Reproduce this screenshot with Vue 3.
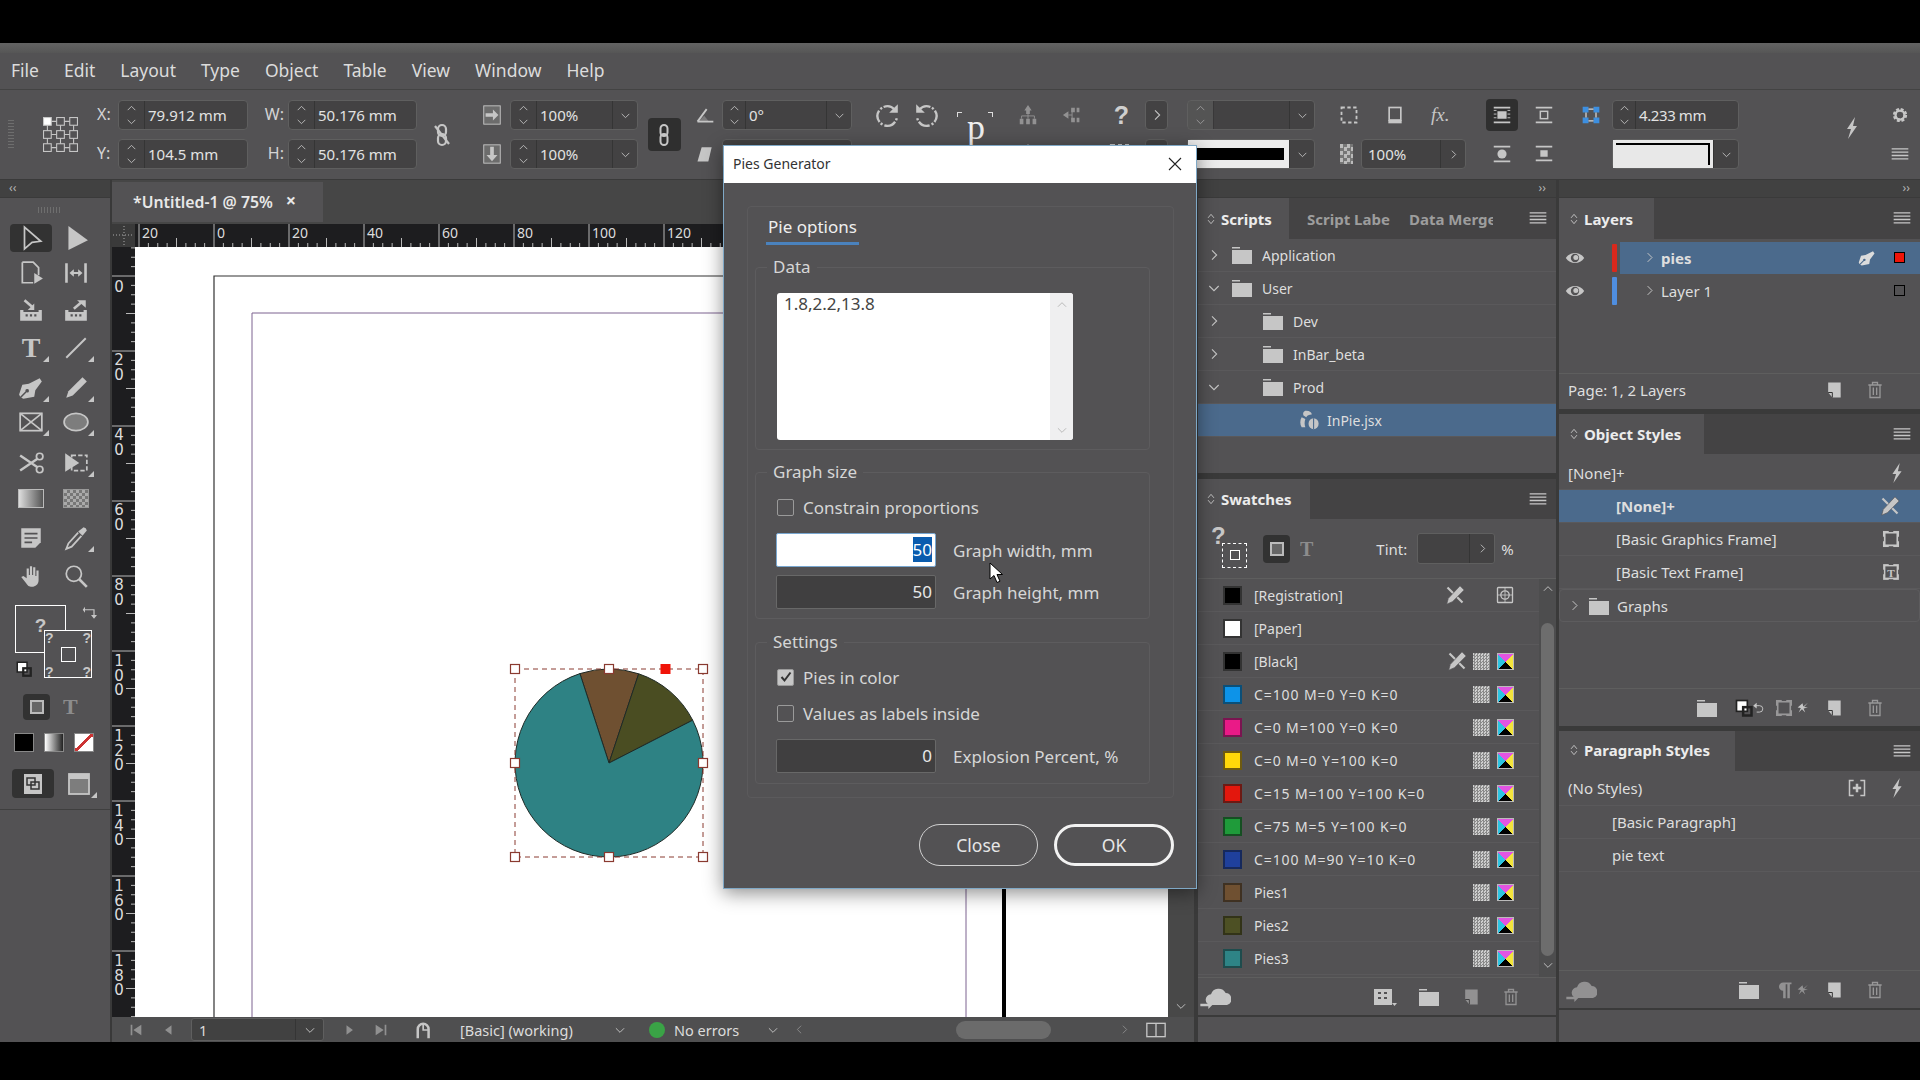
<script setup>
import { h } from 'vue'

const STROKE = 'fill="none" stroke="currentColor" stroke-width="1.6"'
const ICONS = {
  up: `<path d="M5 15l7-7 7 7" ${STROKE}/>`,
  down: `<path d="M5 9l7 7 7-7" ${STROKE}/>`,
  right: `<path d="M9 5l7 7-7 7" ${STROKE}/>`,
  left: `<path d="M15 5l-7 7 7 7" ${STROKE}/>`,
  menu: '<path d="M2 5h20v1.6H2zM2 9h20v1.6H2zM2 13h20v1.6H2zM2 17h20v1.6H2z" fill="currentColor"/>',
  updown: `<path d="M7 10l5-6 5 6M7 14l5 6 5-6" ${STROKE}/>`,
  eye: '<path d="M1 12c5-8 17-8 22 0-5 8-17 8-22 0z" fill="currentColor"/><circle cx="12" cy="12" r="5" fill="#535254"/><circle cx="13" cy="11.5" r="3" fill="currentColor"/>',
  folder: '<path d="M2 4h8v1.4H2zM2 7h20v14H2z" fill="currentColor"/>',
  trash: `<path d="M4 6h16M9 6V3h6v3M6 6v15h12V6M10 9v9M14 9v9" ${STROKE}/>`,
  newpage: '<path d="M5 3h15v18H10l-5-6z" fill="currentColor"/><path d="M5 15h5v6" fill="none" stroke="#333" stroke-width="1.2"/>',
  cloud: '<path d="M9 18a4 4 0 0 1 0-8 6 6 0 0 1 11-1 4.6 4.6 0 0 1 1 9z" fill="currentColor"/><path d="M1 17h6v-2l3 3-3 3v-2H1z" fill="currentColor"/>',
  bolt: '<path d="M15 1L7 13h4L8 23l9-13h-4z" fill="currentColor"/>',
  pencilx: '<path d="M3 3l18 18" fill="none" stroke="currentColor" stroke-width="2.6"/><path d="M18 1l5 5L9 20l-7 3 2-7z" fill="currentColor" stroke="#535254" stroke-width=".8"/>',
  gear: '<circle cx="12" cy="12" r="7" fill="none" stroke="currentColor" stroke-width="5" stroke-dasharray="3.4 2.1"/><circle cx="12" cy="12" r="6" fill="none" stroke="currentColor" stroke-width="3"/>',
  pen: '<path d="M20 3l2 3-6 8-1 6-10 2-2-1 5-5a1.6 1.6 0 1 0-1-1l-5 5-1-2 3-9 6-1z" fill="currentColor"/>',
  pencil: '<path d="M18 2l4 4-13 13-6 2 2-6z" fill="currentColor"/>',
  regmark: `<rect x="3" y="3" width="18" height="18" rx="1" ${STROKE}/><circle cx="12" cy="12" r="5" ${STROKE}/><path d="M12 3v18M3 12h18" fill="none" stroke="currentColor"/>`,
  frame: '<rect x="3" y="3" width="18" height="18" fill="none" stroke="currentColor" stroke-width="3.4"/><path d="M9 1.5h6M9 22.5h6M1.5 9v6M22.5 9v6" stroke="#535254" stroke-width="2"/>',
  frameT: '<rect x="3" y="3" width="18" height="18" fill="none" stroke="currentColor" stroke-width="3"/><path d="M9 1.5h6M9 22.5h6M1.5 9v6M22.5 9v6" stroke="#535254" stroke-width="2"/><text x="12" y="18" font-size="15" font-weight="700" text-anchor="middle" fill="currentColor" font-family="Liberation Serif">T</text>',
  arrowHollow: `<path d="M6 2l15 13-8 1-7 6z" ${STROKE}/>`,
  arrowSolid: '<path d="M5 1l18 13-18 9z" fill="currentColor"/>',
  pagetool: `<path d="M4 2h10l5 5v7M4 2v19h10" ${STROKE}/><path d="M15 12l8 5-8 5z" fill="currentColor"/>`,
  gap: '<path d="M2 3h2.4v18H2zM19.6 3H22v18h-2.4zM6 12l4-3.500V11h4V8.500l4 3.500-4 3.500V13h-4v2.500z" fill="currentColor"/>',
  collect: '<path d="M2 11h3v2h14v-2h3v10H2zM7 15h2v2H7zM11 15h2v2h-2zM15 15h2v2h-2z" fill="currentColor" fill-rule="evenodd"/><path d="M6 2l7 6" stroke="currentColor" stroke-width="2.4"/><path d="M15 5v6H9z" fill="currentColor"/>',
  place: '<path d="M2 11h3v2h14v-2h3v10H2zM7 15h2v2H7zM11 15h2v2h-2zM15 15h2v2h-2z" fill="currentColor" fill-rule="evenodd"/><path d="M10 10l7-6" stroke="currentColor" stroke-width="2.4"/><path d="M13 2h8v7z" fill="currentColor"/>',
  line: '<path d="M3 21L21 3" stroke="currentColor" stroke-width="1.8"/>',
  crossframe: `<rect x="2" y="4" width="20" height="16" ${STROKE}/><path d="M2 4l20 16M22 4L2 20" ${STROKE}/>`,
  ellipse: '<ellipse cx="12" cy="12" rx="11" ry="8" fill="#7d7d7d" stroke="currentColor" stroke-width="1.6"/>',
  scissors: `<circle cx="20" cy="6" r="3" ${STROKE}/><circle cx="20" cy="18" r="3" ${STROKE}/><path d="M2 5l16 11M2 19L18 8" fill="none" stroke="currentColor" stroke-width="2.2"/>`,
  free: '<path d="M2 3l13 9-13 8z" fill="currentColor"/><rect x="8" y="5" width="14" height="14" fill="none" stroke="currentColor" stroke-width="1.6" stroke-dasharray="4 2"/>',
  note: '<path d="M3 3h18v13l-5 5H3z" fill="currentColor"/><path d="M6 8h12M6 12h12M6 16h7" stroke="#535254" stroke-width="1.5"/>',
  dropper: '<path d="M21 3l1 2-4 5-4-4 5-4z" fill="currentColor"/><path d="M14 7l-9 10-2 5 5-2 9-10" fill="none" stroke="currentColor" stroke-width="1.6"/>',
  hand: '<path d="M5 12l3 2V5h2v6h1V3h2v8h1V4h2v8h1V7h2v9c0 4-3 6-6 6-3 0-4-1-6-4l-4-5z" fill="currentColor"/>',
  zoom: `<circle cx="10" cy="10" r="7" ${STROKE}/><path d="M15 15l7 7" fill="none" stroke="currentColor" stroke-width="2.4"/>`,
  swap: `<path d="M4 9h12v8" ${STROKE}/><path d="M4 5L1 9l3 4zM12 16h8l-4 5z" fill="currentColor"/>`,
  preview: '<rect x="3" y="2" width="18" height="20" fill="currentColor"/><rect x="6" y="6" width="8" height="7" fill="none" stroke="#333" stroke-width="1.5"/><rect x="10" y="10" width="8" height="7" fill="none" stroke="#333" stroke-width="1.5"/>',
  screen: '<rect x="2" y="2" width="20" height="20" fill="#7d7d7d" stroke="currentColor" stroke-width="1.8"/><rect x="2" y="2" width="20" height="5" fill="currentColor"/>',
  proxy: '<g fill="none" stroke="currentColor" stroke-width=".7"><rect x="1" y="1" width="5" height="5" fill="#fff"/><rect x="9.5" y="1" width="5" height="5"/><rect x="18" y="1" width="5" height="5"/><rect x="1" y="9.5" width="5" height="5"/><rect x="9.5" y="9.5" width="5" height="5"/><rect x="18" y="9.5" width="5" height="5"/><rect x="1" y="18" width="5" height="5"/><rect x="9.5" y="18" width="5" height="5"/><rect x="18" y="18" width="5" height="5"/><path d="M6 3.500h3.500M14.500 3.500H18M6 12h3.500M14.500 12H18M6 20.500h3.500M14.500 20.500H18M3.500 6v3.500M3.500 14.500V18M12 6v3.500M12 14.500V18M20.500 6v3.500M20.500 14.500V18"/></g>',
  chainoff: '<rect x="8" y="2" width="8" height="11" rx="4" fill="none" stroke="currentColor" stroke-width="2.2"/><rect x="8" y="11" width="8" height="11" rx="4" fill="none" stroke="currentColor" stroke-width="2.2"/><path d="M5 3l14 18" stroke="currentColor" stroke-width="2.2"/>',
  chain: '<rect x="8.5" y="2" width="7" height="11" rx="3.5" fill="none" stroke="currentColor" stroke-width="2"/><rect x="8.5" y="11" width="7" height="11" rx="3.5" fill="none" stroke="currentColor" stroke-width="2"/>',
  scalex: '<rect x="3" y="2" width="18" height="20" fill="#6c6c6c" stroke="currentColor"/><path d="M5 10h8V6l6 6-6 6v-4H5z" fill="currentColor"/>',
  scaley: '<rect x="3" y="2" width="18" height="20" fill="#6c6c6c" stroke="currentColor"/><path d="M10 4h4v9h4l-6 7-6-7h4z" fill="currentColor"/>',
  angle: '<path d="M3 20L14 5M3 20h19" fill="none" stroke="currentColor" stroke-width="2.2"/><path d="M11 13l6 7H4z" fill="currentColor" opacity=".35"/>',
  shear: '<path d="M8 4h12l-4 17H3z" fill="currentColor"/>',
  rotcw: '<path d="M19 7a9 9 0 1 0 2 8" fill="none" stroke="currentColor" stroke-width="2.2" stroke-dasharray="11 1.5 2 2"/><path d="M22 2v8h-8z" fill="currentColor"/>',
  rotccw: '<path d="M5 7a9 9 0 1 1-2 8" fill="none" stroke="currentColor" stroke-width="2.2" stroke-dasharray="11 1.5 2 2"/><path d="M2 2v8h8z" fill="currentColor"/>',
  tree: '<path d="M12 1l4 6H8zM10 7h4v4h-4zM3 16h4v6H3zM10 16h4v6h-4zM17 16h4v6h-4z" fill="currentColor"/><path d="M5 16v-3h14v3M12 11v5" fill="none" stroke="currentColor"/>',
  treeside: '<path d="M1 12l6-4v8zM10 4h4v5h-4zM16 4h3v5h-3zM10 15h4v5h-4zM16 15h3v5h-3z" fill="currentColor"/><path d="M7 12h4M11 6v12" fill="none" stroke="currentColor"/>',
  fitframe: '<rect x="3" y="3" width="18" height="18" fill="none" stroke="currentColor" stroke-width="2.2" stroke-dasharray="4 3"/>',
  shadow: '<rect x="5" y="3" width="14" height="15" fill="none" stroke="currentColor" stroke-width="2"/><rect x="4" y="18" width="16" height="4" fill="currentColor"/>',
  wrapall: '<path d="M3 3h18v2H3zM3 19h18v2H3zM7 8h10v8H7z" fill="currentColor"/><path d="M3 7h3M18 7h3M3 11h3M18 11h3M3 15h3M18 15h3" stroke="currentColor"/>',
  wrapin: `<path d="M3 3h18v2H3zM3 19h18v2H3z" fill="currentColor"/><rect x="8" y="8" width="8" height="8" ${STROKE}/>`,
  wrapcircle: '<path d="M3 3h18v2H3zM3 19h18v2H3z" fill="currentColor"/><circle cx="12" cy="12" r="5" fill="currentColor"/>',
  wrapbar: '<path d="M3 3h18v2H3zM3 18h18v2H3zM8 8h8v7H8z" fill="currentColor"/>',
  bluefit: '<path d="M2 2h7v7H2zM15 2h7v7h-7zM2 15h7v7H2zM15 15h7v7h-7z" fill="#3d8fe0"/><path d="M6 9v6M18 9v6M9 5h6M9 19h6" stroke="#d8d8d8" stroke-width="1.5"/>',
  first: '<path d="M4 4h2.500v16H4zM20 4v16L8 12z" fill="currentColor"/>',
  prev: '<path d="M18 4v16L7 12z" fill="currentColor"/>',
  next: '<path d="M6 4v16l11-8z" fill="currentColor"/>',
  last: '<path d="M4 4v16l12-8zM17.500 4H20v16h-2.500z" fill="currentColor"/>',
  preflight: '<path d="M3 22V11a8 8 0 0 1 16 0v11h-3V11a5 5 0 0 0-10 0v11z" fill="currentColor"/><path d="M11 6v6h6" fill="none" stroke="currentColor" stroke-width="2"/>',
  split: `<rect x="1" y="4" width="22" height="16" ${STROKE}/><path d="M12 4v16" ${STROKE}/>`,
  fillstroke: '<rect x="3" y="3" width="13" height="13" fill="#fff" stroke="#222" stroke-width="2"/><rect x="11" y="11" width="10" height="10" fill="none" stroke="#222" stroke-width="3"/>',
  undo: `<path d="M5 8h8a5 5 0 0 1 0 11H8" ${STROKE} stroke-width="2"/><path d="M8 3v10L2 8z" fill="currentColor"/>`,
  spark: '<path d="M12 4l1.500 6L22 3l-7 8 7 1-8 2 3 7-6-6-6 6 4-8-6-1z" fill="currentColor"/>',
  script: '<path d="M9 2c4 0 6 2 6 4-3 0-5 1-6 3L6 7C5 5 6 2 9 2zM4 9l4 2c-1 3-1 6 0 9H4c-2-3-2-8 0-11z" fill="currentColor"/><ellipse cx="17" cy="16" rx="5.500" ry="6" fill="currentColor"/><path d="M17 10v12" stroke="#4b6a8c" stroke-width="1.2"/>',
  grid4: '<path d="M1 4h18v16H1zM5 7v2h3V7zM11 7v2h3V7zM5 12v2h3v-2zM11 12v2h3v-2z" fill="currentColor" fill-rule="evenodd"/><path d="M19 18h5l-2.500 3z" fill="currentColor"/>',
  plusbox: '<path d="M8 3H3v18h5M16 3h5v18h-5" fill="none" stroke="currentColor" stroke-width="1.8"/><path d="M10.500 7h3v3.500H17v3h-3.500V17h-3v-3.500H7v-3h3.500z" fill="currentColor"/>',
  pilcrow: '<path d="M11 3h10v2h-2v17h-3V5h-2v17h-3v-9a5 5 0 0 1 0-10z" fill="currentColor"/>'
}

// small local icon renderer, n = icon name, s = pixel size
const Ico = (p) => h('svg', {
  viewBox: '0 0 24 24',
  width: p.s || 20,
  height: p.s || 20,
  innerHTML: ICONS[p.n]
})

const menus = ['File', 'Edit', 'Layout', 'Type', 'Object', 'Table', 'View', 'Window', 'Help']

const toolRows = [
  ['arrowHollow', 'arrowSolid'], ['pagetool', 'gap'], ['collect', 'place'],
  ['T', 'line'], ['pen', 'pencil'], ['crossframe', 'ellipse'],
  ['scissors', 'free'], ['grad', 'feather'],
  ['note', 'dropper'], ['hand', 'zoom']
]
const cornered = ['T', 'line', 'pen', 'pencil', 'crossframe', 'ellipse', 'free', 'dropper']

const swatches = [
  { name: '[Registration]', color: '#000', edge: '#333', locked: true, reg: true },
  { name: '[Paper]', color: '#fff', edge: '#333', plain: true },
  { name: '[Black]', color: '#000', edge: '#333', locked: true },
  { name: 'C=100 M=0 Y=0 K=0', color: '#0d93e8', edge: '#0b4f78' },
  { name: 'C=0 M=100 Y=0 K=0', color: '#ea1a87', edge: '#7a1450' },
  { name: 'C=0 M=0 Y=100 K=0', color: '#ffd80a', edge: '#6e5a10' },
  { name: 'C=15 M=100 Y=100 K=0', color: '#e3170d', edge: '#6c1a14' },
  { name: 'C=75 M=5 Y=100 K=0', color: '#1f9b3a', edge: '#154f22' },
  { name: 'C=100 M=90 Y=10 K=0', color: '#1f409c', edge: '#16295c' },
  { name: 'Pies1', color: '#6f5031', edge: '#3f3122' },
  { name: 'Pies2', color: '#4d5024', edge: '#323318' },
  { name: 'Pies3', color: '#2e8486', edge: '#1e4c4d' }
]

// ruler ticks, 75px for every 20 units
const hMajor = [-1, 0, 1, 2, 3, 4, 5, 6]
const hLabel = (k) => String(Math.abs(k * 20))
const hTicks = []
for (let i = -8; i < 56; i++) hTicks.push({ x: 214 + i * 9.375, len: i % 8 === 0 ? 23 : (i + 800) % 4 === 0 ? 9 : 4 })
const vMajor = [0, 1, 2, 3, 4, 5, 6, 7, 8, 9]
const vTicks = []
for (let i = -3; i < 80; i++) vTicks.push({ y: 276 + i * 9.375, len: i % 8 === 0 ? 23 : (i + 800) % 4 === 0 ? 9 : 4 })
const vBase = (k) => 276 + k * 75 + (k === 0 ? 16 : k >= 5 ? 15 : 14)

// pie, same values as the dialog's data field
const values = [1.8, 2.2, 13.8]
const fills = ['#6f5031', '#4a4d22', '#2e8284']
const cx = 609
const cy = 763
const r = 94
const total = values.reduce((a, b) => a + b, 0)
let angle = -18
const slices = values.map((v, i) => {
  const a0 = (angle * Math.PI) / 180
  angle += (v / total) * 360
  const a1 = (angle * Math.PI) / 180
  const large = v / total > 0.5 ? 1 : 0
  return {
    fill: fills[i],
    d: `M${cx} ${cy}L${cx + r * Math.sin(a0)} ${cy - r * Math.cos(a0)}A${r} ${r} 0 ${large} 1 ${cx + r * Math.sin(a1)} ${cy - r * Math.cos(a1)}Z`
  }
})
const handles = [[515, 669], [609, 669], [703, 669], [515, 763], [703, 763], [515, 857], [609, 857], [703, 857]]
</script>

<template>
  <div class="app">
    <div class="strip"></div>
    <div class="menubar">
      <span v-for="m in menus" :key="m">{{ m }}</span>
    </div>

    <div class="control">
      <div class="c2 grip"></div>
      <div class="c2 proxy"><Ico n="proxy" :s="37" /></div>
      <div class="lab">X:</div>
      <div class="lab">Y:</div>
      <div class="field"><div class="step"><Ico n="up" :s="13" /><Ico n="down" :s="13" /></div><span>79.912 mm</span></div>
      <div class="field"><div class="step"><Ico n="up" :s="13" /><Ico n="down" :s="13" /></div><span>104.5 mm</span></div>
      <div class="lab rt">W:</div>
      <div class="lab rt">H:</div>
      <div class="field"><div class="step"><Ico n="up" :s="13" /><Ico n="down" :s="13" /></div><span>50.176 mm</span></div>
      <div class="field"><div class="step"><Ico n="up" :s="13" /><Ico n="down" :s="13" /></div><span>50.176 mm</span></div>
      <div class="c2 cico"><Ico n="chainoff" :s="24" /></div>
      <div class="cico end"><Ico n="scalex" :s="22" /></div>
      <div class="cico end"><Ico n="scaley" :s="22" /></div>
      <div class="field"><div class="step"><Ico n="up" :s="13" /><Ico n="down" :s="13" /></div><span>100%</span><div class="drop"><Ico n="down" :s="13" /></div></div>
      <div class="field"><div class="step"><Ico n="up" :s="13" /><Ico n="down" :s="13" /></div><span>100%</span><div class="drop"><Ico n="down" :s="13" /></div></div>
      <div class="c2 cico"><div class="chainbtn"><Ico n="chain" :s="24" /></div></div>
      <div class="cico end"><Ico n="angle" :s="20" /></div>
      <div class="cico end"><Ico n="shear" :s="20" /></div>
      <div class="field"><div class="step slim"><Ico n="up" :s="13" /><Ico n="down" :s="13" /></div><span>0°</span><div class="drop"><Ico n="down" :s="13" /></div></div>
      <div class="field"></div>
      <div></div><div></div>
      <div class="cico"><Ico n="rotcw" :s="26" /></div><div class="cico"><Ico n="fitframe" :s="20" /></div>
      <div class="cico"><Ico n="rotccw" :s="26" /></div><div class="cico"><Ico n="fitframe" :s="20" /></div>
      <div class="cico flip"><i class="pmark"></i><span class="pchar">p</span><i class="pmark r"></i></div><div></div>
      <div class="cico dim"><Ico n="tree" :s="22" /></div><div class="cico"><Ico n="tree" :s="22" /></div>
      <div class="cico dim"><Ico n="treeside" :s="22" /></div><div></div>
      <div class="cico"><span class="qmark">?</span></div><div class="cico"><Ico n="fitframe" :s="24" /></div>
      <div class="sqbtn"><Ico n="right" :s="16" /></div><div class="sqbtn"><Ico n="right" :s="16" /></div>
      <div></div><div></div>
      <div class="field"><div class="step off"><Ico n="up" :s="13" /><Ico n="down" :s="13" /></div><span></span><div class="drop"><Ico n="down" :s="13" /></div></div>
      <div class="field"><div class="strokebox"><i></i></div><div class="drop"><Ico n="down" :s="13" /></div></div>
      <div></div><div></div>
      <div class="fxrow"><Ico n="fitframe" :s="20" /><Ico n="shadow" :s="20" /><span class="fx">fx.</span></div>
      <div class="opac">
        <div class="checker"></div>
        <div class="field wide"><span>100%</span><div class="drop"><Ico n="right" :s="13" /></div></div>
      </div>
      <div class="cico"><div class="tilebtn"><Ico n="wrapall" :s="22" /></div></div>
      <div class="cico"><Ico n="wrapcircle" :s="22" /></div>
      <div class="cico"><Ico n="wrapin" :s="22" /></div>
      <div class="cico"><Ico n="wrapbar" :s="22" /></div>
      <div class="cico blue2"><Ico n="bluefit" :s="20" /></div><div></div>
      <div class="field"><div class="step slim"><Ico n="up" :s="13" /><Ico n="down" :s="13" /></div><span class="tight">4.233 mm</span></div>
      <div class="field"><div class="linebox"></div><div class="drop"><Ico n="down" :s="13" /></div></div>
      <div></div><div></div>
      <div class="c2 cico boltcell"><Ico n="bolt" :s="24" /></div>
      <div class="cico"><Ico n="gear" :s="18" /></div>
      <div class="cico"><Ico n="menu" :s="20" /></div>
    </div>

    <div class="work">
      <aside class="tools">
        <div class="collapse left">‹‹</div>
        <div class="toolgrip"></div>
        <div class="toolgrid">
          <template v-for="(row, i) in toolRows" :key="i">
            <div v-for="t in row" :key="t" class="tool" :class="{ on: t === 'arrowHollow' }">
              <span v-if="t === 'T'" class="tee">T</span>
              <div v-else-if="t === 'grad'" class="gradbox"></div>
              <div v-else-if="t === 'feather'" class="featherbox"></div>
              <Ico v-else :n="t" :s="26" />
              <i v-if="cornered.includes(t)" class="tri"></i>
            </div>
          </template>
        </div>
        <div class="fillstroke">
          <div class="fillbox"><span class="q">?</span></div>
          <div class="strokebig">
            <span class="q tl">?</span><span class="q tr">?</span><span class="q bl">?</span><span class="q br">?</span>
            <i></i>
          </div>
          <Ico class="swapico" n="swap" :s="18" />
          <Ico class="defico" n="fillstroke" :s="18" />
        </div>
        <div class="applyto">
          <div class="applybtn"><i></i></div>
          <span class="tee dim">T</span>
        </div>
        <div class="applycolor">
          <div class="blackbox"></div>
          <div class="gradmini"></div>
          <div class="nonebox"></div>
        </div>
        <div class="viewmode">
          <div class="viewbtn"><Ico n="preview" :s="24" /></div>
          <div class="viewalt"><Ico n="screen" :s="24" /><i class="tri"></i></div>
        </div>
      </aside>

      <section class="doc">
        <div class="tabbar">
          <div class="doctab"><b>*Untitled-1 @ 75%</b><span class="x">×</span></div>
        </div>
        <div class="hruler">
          <svg width="1082" height="23" viewBox="112 224 1082 23">
            <rect x="112" y="224" width="23" height="23" fill="#3a3a3a" />
            <path d="M113 235h21M124 226v20" stroke="#aaa" stroke-dasharray="1 2" />
            <line v-for="(t, i) in hTicks" :key="i" :x1="t.x" :x2="t.x" y1="247" :y2="247 - t.len" stroke="#b9b9b9" />
            <text v-for="k in hMajor" :key="k" :x="217 + k * 75" y="238" class="rl">{{ hLabel(k) }}</text>
          </svg>
        </div>
        <div class="canvasrow">
          <div class="vruler">
            <svg width="23" height="770" viewBox="112 247 23 770">
              <line v-for="(t, i) in vTicks" :key="i" :y1="t.y" :y2="t.y" x1="135" :x2="135 - t.len" stroke="#b9b9b9" />
              <template v-for="k in vMajor" :key="k">
                <text v-for="(c, j) in String(k * 20)" :key="j" x="119" :y="vBase(k) + j * 14.5" text-anchor="middle" class="rl big">{{ c }}</text>
              </template>
            </svg>
          </div>
          <div class="canvas">
            <svg width="1033" height="770" viewBox="135 247 1033 770">
              <path d="M214 1017V276H1004" fill="none" stroke="#333" stroke-width="1.2" />
              <path d="M1004 276V1017" fill="none" stroke="#000" stroke-width="4" />
              <path d="M252 1017V313H966V1017" fill="none" stroke="#7d6290" />
              <path v-for="s in slices" :key="s.fill" :d="s.d" :fill="s.fill" stroke="#1f2a26" stroke-width="1" />
              <rect x="515" y="669" width="188" height="188" fill="none" stroke="#8a3a30" stroke-dasharray="5 4" />
              <rect v-for="h2 in handles" :key="h2.join()" :x="h2[0] - 4.5" :y="h2[1] - 4.5" width="9" height="9" fill="#fff" stroke="#8a3a30" stroke-width="1.2" />
              <rect x="660.5" y="664" width="10" height="10" fill="#f01408" />
            </svg>
          </div>
          <div class="vscroll"><Ico n="down" :s="14" /></div>
        </div>
        <div class="status">
          <Ico class="st dim first" n="first" :s="16" />
          <Ico class="st dim prev" n="prev" :s="14" />
          <div class="pagefield"><span>1</span><div class="drop"><Ico n="down" :s="14" /></div></div>
          <Ico class="st dim next" n="next" :s="14" />
          <Ico class="st dim last" n="last" :s="16" />
          <Ico class="st pre" n="preflight" :s="20" />
          <span class="prof">[Basic] (working)</span>
          <Ico class="st" n="down" :s="14" />
          <i class="dot"></i>
          <span class="noerr">No errors</span>
          <Ico class="st" n="down" :s="14" />
          <Ico class="st dim lf" n="left" :s="13" />
          <div class="thumb"></div>
          <Ico class="st dim rg" n="right" :s="13" />
          <Ico class="st spl" n="split" :s="20" />
        </div>
      </section>

      <div class="dock dock1">
        <div class="collapse right">››</div>
        <div class="panel scripts">
          <div class="phead">
            <div class="ptab"><Ico n="updown" :s="14" />Scripts</div>
            <div class="ptab2 a">Script Labe</div>
            <div class="ptab2 b">Data Merge</div>
            <Ico class="pmenu" n="menu" :s="20" />
          </div>
          <div class="row tree"><Ico class="chev" n="right" :s="16" /><Ico class="fold" n="folder" :s="24" /><span>Application</span></div>
          <div class="row tree"><Ico class="chev" n="down" :s="16" /><Ico class="fold" n="folder" :s="24" /><span>User</span></div>
          <div class="row tree in"><Ico class="chev" n="right" :s="16" /><Ico class="fold" n="folder" :s="24" /><span>Dev</span></div>
          <div class="row tree in"><Ico class="chev" n="right" :s="16" /><Ico class="fold" n="folder" :s="24" /><span>InBar_beta</span></div>
          <div class="row tree in"><Ico class="chev" n="down" :s="16" /><Ico class="fold" n="folder" :s="24" /><span>Prod</span></div>
          <div class="row tree sel script"><Ico class="fold" n="script" :s="22" /><span>InPie.jsx</span></div>
        </div>
        <div class="panel swatches">
          <div class="phead short">
            <div class="ptab w1"><Ico n="updown" :s="14" />Swatches</div>
            <Ico class="pmenu" n="menu" :s="20" />
          </div>
          <div class="tintrow">
            <div class="minifs">
              <span class="q">?</span>
              <div class="minist"><i></i></div>
            </div>
            <div class="applybtn small"><i></i></div>
            <span class="tee dim">T</span>
            <span class="tintlab">Tint:</span>
            <div class="tintfield"><div class="drop"><Ico n="right" :s="13" /></div></div>
            <span class="pct">%</span>
          </div>
          <div class="swatchbody">
            <div class="swlist">
              <div v-for="s in swatches" :key="s.name" class="swrow">
                <i class="chip" :style="{ background: s.color, borderColor: s.edge }"></i>
                <span class="swname" :class="{ cmykname: s.name.startsWith('C=') }">{{ s.name }}</span>
                <Ico v-if="s.locked" class="lock" n="pencilx" :s="20" />
                <i v-if="!s.plain && !s.reg" class="tone"></i>
                <Ico v-if="s.reg" class="regi" n="regmark" :s="20" />
                <i v-else-if="!s.plain" class="cmyk"></i>
              </div>
            </div>
            <div class="swscroll">
              <Ico n="up" :s="14" />
              <div class="swthumb"></div>
              <Ico n="down" :s="14" />
            </div>
          </div>
          <div class="pfoot swfoot">
            <Ico class="cl" n="cloud" :s="32" />
            <span class="sp"></span>
            <Ico n="grid4" :s="24" />
            <Ico n="folder" :s="24" />
            <Ico class="dim" n="newpage" :s="20" />
            <Ico class="dim" n="trash" :s="20" />
          </div>
        </div>
        <div class="endbar"></div>
      </div>

      <div class="dock dock2">
        <div class="collapse right">››</div>
        <div class="panel layers">
          <div class="phead">
            <div class="ptab w2"><Ico n="updown" :s="14" />Layers</div>
            <Ico class="pmenu" n="menu" :s="20" />
          </div>
          <div class="layerlist">
            <div class="lrow">
              <Ico class="leye" n="eye" :s="20" />
              <i class="lbar red"></i>
              <div class="lmain sel"><Ico n="right" :s="15" /><b>pies</b><Ico class="lpen" n="pen" :s="18" /><i class="lsq redsq"></i></div>
            </div>
            <div class="lrow">
              <Ico class="leye" n="eye" :s="20" />
              <i class="lbar blue"></i>
              <div class="lmain"><Ico n="right" :s="15" /><span>Layer 1</span><i class="lsq"></i></div>
            </div>
          </div>
          <div class="pfoot lfoot">
            <span>Page: 1, 2 Layers</span>
            <span class="sp"></span>
            <Ico n="newpage" :s="20" />
            <Ico class="dimmer" n="trash" :s="20" />
          </div>
        </div>
        <div class="panel objstyles">
          <div class="phead short">
            <div class="ptab w3"><Ico n="updown" :s="14" />Object Styles</div>
            <Ico class="pmenu" n="menu" :s="20" />
          </div>
          <div class="stylelist obj">
            <div class="srow"><span>[None]+</span><Ico class="boltr" n="bolt" :s="22" /></div>
            <div class="srow ind sel"><b>[None]+</b><Ico n="pencilx" :s="20" /></div>
            <div class="srow ind"><span>[Basic Graphics Frame]</span><Ico n="frame" :s="18" /></div>
            <div class="srow ind"><span>[Basic Text Frame]</span><Ico n="frameT" :s="18" /></div>
            <div class="srow group"><Ico n="right" :s="15" /><Ico class="gf" n="folder" :s="24" /><span>Graphs</span></div>
          </div>
          <div class="pfoot ofoot">
            <Ico class="m1" n="folder" :s="24" />
            <Ico class="m2" n="fillstroke" :s="20" />
            <Ico class="m3" n="undo" :s="14" />
            <Ico class="m4 dimmer" n="frame" :s="18" />
            <Ico class="m5" n="spark" :s="13" />
            <Ico class="m6" n="newpage" :s="20" />
            <Ico class="m7 dimmer" n="trash" :s="20" />
          </div>
        </div>
        <div class="panel parastyles">
          <div class="phead short">
            <div class="ptab w4"><Ico n="updown" :s="14" />Paragraph Styles</div>
            <Ico class="pmenu" n="menu" :s="20" />
          </div>
          <div class="stylelist">
            <div class="srow first"><span>(No Styles)</span><Ico class="pb" n="plusbox" :s="20" /><Ico class="boltr" n="bolt" :s="22" /></div>
            <div class="srow ind2"><span>[Basic Paragraph]</span></div>
            <div class="srow ind2"><span>pie text</span></div>
          </div>
          <div class="pfoot pfooter">
            <Ico class="dim cl" n="cloud" :s="32" />
            <span class="sp"></span>
            <Ico n="folder" :s="24" />
            <Ico class="dim m8" n="pilcrow" :s="20" />
            <Ico class="dim m9" n="spark" :s="13" />
            <Ico class="m6" n="newpage" :s="20" />
            <Ico class="m7 dimmer" n="trash" :s="20" />
          </div>
        </div>
        <div class="endbar"></div>
      </div>
    </div>

    <div class="dialog">
      <div class="titlebar">
        <span>Pies Generator</span>
        <svg class="closex" width="14" height="14" viewBox="0 0 14 14"><path d="M1 1l12 12M13 1L1 13" stroke="#222" stroke-width="1.1" /></svg>
      </div>
      <div class="dbody">
        <div class="dpanel">
          <div class="dtab"><span>Pie options</span></div>
          <div class="group g-data">
            <div class="glabel">Data</div>
            <div class="textbox">
              <div class="tb-text">1.8,2.2,13.8</div>
              <div class="tb-scroll"><Ico n="up" :s="14" /><Ico n="down" :s="14" /></div>
            </div>
          </div>
          <div class="group g-size">
            <div class="glabel">Graph size</div>
            <label class="chk"><i class="box"></i>Constrain proportions</label>
            <div class="inrow"><div class="input focus"><mark>50</mark></div><span>Graph width, mm</span></div>
            <div class="inrow"><div class="input">50</div><span>Graph height, mm</span></div>
          </div>
          <div class="group g-set">
            <div class="glabel">Settings</div>
            <label class="chk"><i class="box on"><svg width="14" height="14" viewBox="0 0 14 14"><path d="M2.5 7l3 3.500 6-8" fill="none" stroke="#333" stroke-width="2" /></svg></i>Pies in color</label>
            <label class="chk"><i class="box"></i>Values as labels inside</label>
            <div class="inrow"><div class="input">0</div><span>Explosion Percent, %</span></div>
          </div>
        </div>
        <div class="dbuttons">
          <button type="button" class="btn">Close</button>
          <button type="button" class="btn primary">OK</button>
        </div>
      </div>
      <svg class="cursor" width="14" height="22" viewBox="0 0 14 22"><path d="M1 1v16l4-3.500 3 7 3-1.300-3-6.700h5.500z" fill="#fff" stroke="#000" /></svg>
    </div>
  </div>
</template>

<style>
html, body { margin: 0; background: #000; }
</style>

<style scoped>
.app {
  position: relative;
  width: 1920px;
  height: 1080px;
  padding-top: 43px;
  box-sizing: border-box;
  background: #000;
  overflow: hidden;
  color: #dedede;
  font-family: "Noto Sans", "Open Sans", sans-serif;
  font-size: 14px;
}
svg { display: block; flex: none; color: #c6c6c6; }
.dim { opacity: .55; }
.dimmer { opacity: .6; }
.sp { flex: 1; }

.strip { height: 10px; background: linear-gradient(#636363, #565656); }
.menubar {
  display: flex;
  align-items: center;
  gap: 25px;
  padding: 0 0 2px 11px;
  box-sizing: border-box;
  height: 37px;
  background: #535254;
  border-bottom: 1px solid #434343;
  font-size: 17.5px;
  color: #dcdcdc;
}

.control {
  height: 90px;
  box-sizing: border-box;
  padding-top: 10px;
  display: grid;
  grid-auto-flow: column;
  grid-template-rows: 30px 30px;
  row-gap: 9px;
  grid-template-columns: 42px 55px 21px 130px 40px 129px 50px 43px 128px 52px 32px 130px 15px 40px 40px 58px 46px 44px 50px 23px 19px 128px 15px 150px 44px 40px 48px 127px 81px 60px 40px;
  background: #535254;
  border-bottom: 1px solid #3a3a3a;
}
.c2 { grid-row: span 2; }
.grip { margin: 20px 0 0 8px; width: 6px; height: 30px; background: repeating-linear-gradient(#6e6e6e 0 1px, transparent 1px 3px); }
.proxy { padding-top: 16px; }
.lab { line-height: 28px; font-size: 16px; color: #d4d4d4; }
.lab.rt { text-align: right; padding-right: 4px; }
.field {
  display: flex;
  align-items: center;
  min-width: 0;
  background: #434243;
  border: 1px solid #5f5f5f;
  border-radius: 4px;
  box-sizing: border-box;
  font-size: 15px;
  color: #e2e2e2;
}
.field > span { flex: 1; padding-left: 3px; padding-bottom: 1px; white-space: nowrap; }
.field > span.tight { letter-spacing: -.4px; }
.step {
  width: 25px;
  height: 100%;
  display: flex;
  flex-direction: column;
  align-items: center;
  justify-content: center;
  flex: none;
  border-right: 1px solid #353535;
}
.step.slim { width: 22px; }
.step.off { background: #5c5c5c; opacity: .7; }
.drop {
  width: 24px;
  height: 100%;
  flex: none;
  display: flex;
  align-items: center;
  justify-content: center;
  border-left: 1px solid #353535;
}
.cico { display: flex; align-items: center; justify-content: center; }
.cico.end { justify-content: flex-end; padding-right: 7px; }
.cico.flip { align-items: flex-start; position: relative; }
.cico.blue2 { padding-left: 5px; }
.boltcell { padding: 0 0 14px 4px; }
.pmark { position: absolute; top: 12px; left: 10px; width: 4px; height: 4px; border-left: 1px solid #ddd; border-top: 1px solid #ddd; }
.pmark.r { left: auto; right: 12px; border-left: 0; border-right: 1px solid #ddd; }
.chainbtn {
  width: 33px;
  height: 33px;
  display: flex;
  align-items: center;
  justify-content: center;
  background: #2f2f2f;
  border-radius: 4px;
}
.pchar { font: 36px/30px "Liberation Serif", serif; color: #eee; margin-top: 12px; }
.qmark { font: bold 25px "Liberation Sans", sans-serif; color: #cfcfcf; margin-left: 3px; }
.sqbtn {
  display: flex;
  align-items: center;
  justify-content: center;
  background: #434243;
  border-radius: 4px;
  border: 1px solid #5f5f5f;
}
.strokebox { flex: 1; height: 100%; background: #ececec; display: flex; align-items: center; padding-right: 5px; }
.strokebox i { display: block; width: 100%; height: 12px; background: #000; }
.fxrow { display: flex; align-items: center; gap: 26px; padding-left: 9px; }
.fx { font: italic 19px "Liberation Serif", serif; color: #c6c6c6; }
.opac { display: flex; align-items: center; gap: 8px; padding-left: 10px; }
.checker { width: 13px; height: 20px; background: repeating-conic-gradient(#777 0 25%, #bbb 0 50%) 0 0/7px 7px; }
.field.wide { width: 105px; height: 30px; }
.field.wide > span { padding-left: 6px; }
.tilebtn { width: 32px; height: 32px; background: #2f2f2f; border-radius: 4px; display: flex; align-items: center; justify-content: center; }
.linebox { flex: 1; height: 100%; background: #e8e8e8; border-top: 0; position: relative; }
.linebox::after { content: ""; position: absolute; left: 3px; right: 3px; top: 3px; bottom: 3px; border-top: 2px solid #000; border-right: 2px solid #000; }

.work { display: flex; height: 862px; background: #535254; }
.collapse { height: 18px; box-sizing: border-box; line-height: 15px; background: #414141; color: #b4b4b4; font-size: 12px; border-bottom: 1px solid #3a3a3a; }
.collapse.left { padding-left: 9px; }
.collapse.right { text-align: right; padding-right: 10px; }

.tools { width: 112px; box-sizing: border-box; flex: none; border-right: 2px solid #393939; height: 862px; }
.toolgrip { height: 24px; background: repeating-linear-gradient(90deg, #6e6e6e 0 1px, transparent 1px 3px) 38px 9px/24px 6px no-repeat; }
.toolgrid {
  display: grid;
  grid-template-columns: 45px 45px;
  grid-template-rows: 35px 38px 37px 40px 34px 41px 35px 40px 38px 29px;
  padding-left: 10px;
  padding-top: 4px;
}
.tool { position: relative; width: 42px; height: 28px; display: flex; align-items: center; justify-content: center; margin-top: -2px; }
.tool.on { background: #323232; border-radius: 4px; }
.tri { position: absolute; right: 3px; bottom: 0; width: 0; height: 0; border-left: 6px solid transparent; border-bottom: 6px solid #c6c6c6; }
.tee { font: bold 28px/28px "Liberation Serif", serif; color: #c6c6c6; }
.tee.dim { font-size: 22px; opacity: .5; }
.gradbox { width: 24px; height: 17px; background: linear-gradient(90deg, #ddd, #555); border: 1px solid #bbb; }
.featherbox { width: 24px; height: 17px; background: repeating-conic-gradient(#777 0 25%, #aaa 0 50%) 0 0/6px 6px; border: 1px solid #999; }
.fillstroke { position: relative; height: 89px; margin-top: 12px; }
.fillbox { position: absolute; left: 15px; top: 0; width: 51px; height: 48px; border: 1px solid #fff; display: flex; justify-content: center; padding-top: 10px; box-sizing: border-box; }
.q { font: bold 19px/20px "Liberation Sans", sans-serif; color: #c6c6c6; }
.strokebig { position: absolute; left: 44px; top: 25px; width: 48px; height: 48px; border: 1px solid #fff; background: #535254; box-sizing: border-box; }
.strokebig i { position: absolute; left: 16px; top: 16px; width: 15px; height: 15px; border: 1px solid #fff; box-sizing: border-box; }
.strokebig .q { position: absolute; font-size: 14px; line-height: 14px; }
.tl { left: 0; top: 0; } .tr { right: 0; top: 0; } .bl { left: 0; bottom: -2px; } .br { right: 0; bottom: -2px; }
.swapico { position: absolute; left: 82px; top: -2px; }
.defico { position: absolute; left: 15px; top: 55px; }
.applyto { display: flex; align-items: center; gap: 13px; padding-left: 23px; height: 26px; }
.applybtn { width: 27px; height: 26px; background: #323232; border-radius: 4px; display: flex; align-items: center; justify-content: center; }
.applybtn i { width: 10px; height: 10px; border: 2px solid #bbb; background: #666; }
.applycolor { display: flex; gap: 10px; padding: 0 0 0 14px; margin-top: 13px; }
.applycolor div { width: 18px; height: 17px; border: 1px solid #888; box-sizing: content-box; }
.blackbox { background: #000; }
.gradmini { background: linear-gradient(90deg, #fff, #222); }
.nonebox { background: linear-gradient(to top left, #fff 44%, #c33 44% 56%, #fff 56%); }
.viewmode { display: flex; gap: 4px; padding-left: 12px; margin-top: 17px; height: 29px; padding-bottom: 11px; border-bottom: 1px solid #3f3f3f; }
.viewbtn { width: 42px; height: 29px; background: #323232; border-radius: 4px; display: flex; align-items: center; justify-content: center; }
.viewalt { position: relative; width: 42px; display: flex; align-items: center; justify-content: center; }

.doc { width: 1082px; flex: none; display: flex; flex-direction: column; }
.tabbar { height: 44px; box-sizing: border-box; padding-top: 2px; background: #464646; }
.doctab { width: 211px; height: 40px; box-sizing: border-box; padding-left: 21px; display: flex; align-items: center; gap: 13px; background: #535254; font-size: 15.8px; color: #e8e8e8; white-space: nowrap; }
.doctab b { font-weight: 600; }
.x { font-size: 18px; font-weight: bold; line-height: 14px; margin-top: -4px; }
.hruler { height: 23px; background: #1d1d1f; }
.rl { font: 14px "Noto Sans", sans-serif; fill: #dcdcdc; }
.rl.big { font: 15px "DejaVu Sans", sans-serif; }
.canvasrow { height: 770px; display: flex; }
.vruler { width: 23px; background: #1d1d1f; flex: none; }
.canvas { width: 1033px; background: #fff; flex: none; }
.vscroll { width: 26px; flex: none; background: #484848; display: flex; align-items: flex-end; justify-content: center; padding-bottom: 4px; box-sizing: border-box; }
.status { height: 25px; display: flex; align-items: center; background: #4f4f50; color: #dcdcdc; font-size: 14.5px; white-space: nowrap; }
.st.first { margin-left: 16px; }
.st.prev { margin-left: 17px; }
.pagefield { width: 133px; height: 23px; margin-left: 16px; display: flex; align-items: center; background: #414141; border: 1px solid #5f5f5f; border-radius: 3px; box-sizing: border-box; padding-left: 7px; }
.pagefield span { flex: 1; }
.pagefield .drop { width: 27px; }
.st.next { margin-left: 19px; }
.st.last { margin-left: 16px; }
.st.pre { margin-left: 25px; }
.prof { margin-left: 26px; width: 153px; }
.dot { width: 16px; height: 16px; border-radius: 50%; background: #3aa346; margin-left: 22px; }
.noerr { margin-left: 9px; width: 92px; }
.st.lf { margin-left: 13px; }
.thumb { width: 95px; height: 18px; border-radius: 9px; background: #6b6b6b; margin-left: 150px; }
.st.rg { margin-left: 67px; }
.st.spl { margin-left: 15px; }

.dock { width: 362px; flex: none; display: flex; flex-direction: column; background: #3a3a3a; }
.dock1 { box-sizing: border-box; padding-left: 4px; }
.dock2 { width: 364px; box-sizing: border-box; padding-left: 3px; }
.panel { background: #535254; display: flex; flex-direction: column; }
.scripts { height: 275px; margin-bottom: 6px; }
.swatches { height: 536px; }
.layers { height: 211px; margin-bottom: 5px; }
.objstyles { height: 312px; margin-bottom: 5px; }
.parastyles { height: 277px; }
.endbar { flex: 1; background: #535254; margin-top: 2px; }
.phead { height: 41px; flex: none; display: flex; background: #444344; position: relative; font-weight: 700; align-items: stretch; font-size: 15px; }
.phead.short { height: 40px; }
.ptab { width: 91px; display: flex; align-items: center; gap: 3px; padding-left: 6px; box-sizing: border-box; background: #535254; color: #ececec; white-space: nowrap; }
.ptab.w1 { width: 112px; }
.ptab.w2 { width: 95px; padding-left: 8px; }
.ptab.w3 { width: 145px; padding-left: 8px; }
.ptab.w4 { width: 176px; padding-left: 8px; padding-bottom: 2px; }
.ptab2 { display: flex; align-items: center; color: #9d9d9d; overflow: hidden; white-space: nowrap; }
.ptab2.a { width: 84px; margin-left: 18px; }
.ptab2.b { width: 84px; margin-left: 18px; }
.pmenu { position: absolute; right: 8px; top: 10px; }

.row { height: 33px; display: flex; align-items: center; border-bottom: 1px solid #5a595b; box-sizing: border-box; white-space: nowrap; font-size: 14px; }
.chev { margin-left: 8px; }
.fold { margin-left: 8px; }
.row.tree > span { margin-left: 8px; }
.row.in .fold { margin-left: 39px; }
.sel { background: #4b6a8c; }
.row.script { padding-left: 100px; }
.row.script .fold { margin: 0; }
.row.script span { margin-left: 7px; }

.tintrow { height: 60px; flex: none; display: flex; align-items: center; border-bottom: 1px solid #5e5e5e; box-sizing: border-box; font-size: 15px; }
.minifs { position: relative; width: 36px; height: 38px; margin-left: 13px; }
.minifs > .q { position: absolute; left: 0; top: -4px; font-size: 24px; }
.minist { position: absolute; right: 0; bottom: 0; width: 25px; height: 25px; border: 1px dashed #fff; box-sizing: border-box; display: flex; align-items: center; justify-content: center; background: #535254; }
.minist i { width: 8px; height: 8px; border: 1px solid #fff; }
.applybtn.small { margin-left: 16px; height: 28px; }
.tintrow .tee.dim { margin-left: 10px; font-size: 20px; }
.tintlab { margin-left: 63px; }
.tintfield { width: 78px; height: 31px; margin-left: 10px; display: flex; justify-content: flex-end; background: #434243; border: 1px solid #5f5f5f; border-radius: 3px; box-sizing: border-box; }
.pct { margin-left: 6px; }
.swatchbody { flex: 1; display: flex; min-height: 0; }
.swlist { width: 341px; flex: none; }
.swrow { height: 33px; display: flex; align-items: center; border-bottom: 1px solid #5a595b; box-sizing: border-box; white-space: nowrap; padding-left: 25px; position: relative; font-size: 14px; }
.chip { width: 15px; height: 15px; border: 2px solid; flex: none; }
.swname { margin-left: 12px; flex: 1; }
.cmykname { letter-spacing: .9px; }
.lock { margin-right: 6px; }
.tone { width: 17px; height: 17px; margin-right: 7px; background: repeating-conic-gradient(#8a8a8a 0 25%, #cfcfcf 0 50%) 0 0/3px 3px; }
.cmyk { width: 17px; height: 17px; margin-right: 25px; background: conic-gradient(from -45deg, #e254e2 0 90deg, #f3e43c 0 180deg, #000 0 270deg, #2cc4e2 0); border: 1px solid #bbb; box-sizing: border-box; }
.swrow .regi { margin-right: 24px; margin-left: 24px; }
.swscroll { flex: 1; display: flex; flex-direction: column; align-items: center; padding-top: 3px; background: #4d4d4e; }
.swthumb { width: 13px; height: 333px; margin: 27px 0 2px; border-radius: 7px; background: #6d6d6d; }
.pfoot { height: 38px; flex: none; display: flex; align-items: center; gap: 17px; border-top: 1px solid #5e5e5e; box-sizing: border-box; padding: 0 23px 0 9px; }
.swfoot { padding: 0 35px 0 1px; gap: 20px; }

.layerlist { height: 134px; box-sizing: border-box; padding-top: 2px; flex: none; }
.lrow { height: 33px; display: flex; align-items: center; font-size: 15px; }
.leye { margin-left: 6px; }
.lbar { width: 5px; height: 28px; margin-left: 27px; border-radius: 1px; }
.red { background: #d8281c; }
.blue { background: #4f8ee0; }
.lmain { height: 32px; flex: 1; display: flex; align-items: center; padding-left: 10px; gap: 4px; margin-left: 3px; }
.lmain > svg:first-child { margin-left: 12px; }
.lmain .lpen { margin-left: auto; margin-right: 14px; color: #dcdcdc; }
.lsq { width: 9px; height: 9px; border: 1px solid #000; margin-right: 15px; flex: none; }
.lmain span + .lsq { margin-left: auto; }
.redsq { background: #f01408; }
.lfoot { padding: 0 35px 4px 9px; gap: 21px; font-size: 15px; height: 36px; }

.stylelist { flex: 1; min-height: 0; }
.stylelist.obj { padding-top: 3px; }
.srow { height: 33px; display: flex; align-items: center; justify-content: space-between; box-sizing: border-box; padding: 0 20px 0 9px; border-bottom: 1px solid #5a595b; white-space: nowrap; font-size: 15px; }
.boltr { margin-right: -8px; }
.srow.ind { padding-left: 57px; }
.srow.ind2 { padding-left: 53px; }
.srow.first { justify-content: flex-start; height: 35px; }
.srow .pb { margin-left: auto; margin-right: 19px; }
.srow.group { justify-content: flex-start; padding-left: 7px; gap: 2px; }
.gf { margin: 0 4px 0 3px; }
.ofoot, .pfooter { gap: 0; padding: 0 35px 0 6px; justify-content: flex-start; }
.m1 { margin-left: 130px; }
.m2 { margin-left: 15px; }
.m3 { margin-left: -2px; }
.m4 { margin-left: 9px; }
.m5 { margin-left: 3px; }
.m6 { margin-left: 15px; }
.m7 { margin-left: 21px; }
.m8 { margin-left: 13px; }
.m9 { margin-left: 2px; }

.dialog {
  position: absolute;
  left: 723px;
  top: 145px;
  width: 474px;
  height: 744px;
  box-sizing: border-box;
  background: #535254;
  border: 1px solid #7fa8c6;
  box-shadow: 0 4px 18px rgba(0, 0, 0, .45);
  color: #d6d6d6;
  font-size: 17px;
}
.titlebar {
  height: 37px;
  display: flex;
  align-items: center;
  justify-content: space-between;
  padding: 0 14px 2px 9px;
  box-sizing: border-box;
  background: #fff;
  color: #333;
  font-size: 14px;
}
.dbody { padding: 23px 22px 0 23px; }
.dpanel { height: 592px; box-sizing: border-box; padding: 0 23px 0 7px; border: 1px solid #5b5a5c; border-radius: 4px; }
.dtab { height: 60px; padding: 7px 0 0 11px; box-sizing: border-box; color: #efefef; }
.dtab span { display: inline-block; height: 28px; line-height: 26px; padding: 0 2px; border-bottom: 3px solid #4a82bd; }
.group { position: relative; border: 1px solid #5d5c5e; border-radius: 4px; padding: 0 0 0 21px; box-sizing: border-box; }
.glabel { position: absolute; left: 11px; top: -12px; padding: 0 6px; line-height: 22px; background: #535254; }
.g-data { height: 183px; padding-top: 25px; margin-bottom: 22px; }
.g-size { height: 147px; padding-top: 24px; margin-bottom: 23px; }
.g-set { height: 142px; padding-top: 24px; }
.textbox { width: 296px; height: 147px; display: flex; background: #fff; border-radius: 3px; color: #444; }
.tb-text { flex: 1; padding: 0 7px; line-height: 22px; font-size: 17px; }
.tb-scroll { width: 23px; display: flex; flex-direction: column; justify-content: space-between; align-items: center; background: #efeff0; padding: 5px 0 3px; border-radius: 0 3px 3px 0; }
.tb-scroll svg { color: #b5b5b5; }
.chk { display: flex; align-items: center; gap: 9px; height: 20px; margin-bottom: 16px; }
.box { width: 17px; height: 17px; border: 1px solid #9a9a9a; border-radius: 2px; box-sizing: border-box; display: flex; align-items: center; justify-content: center; }
.box.on { background: #c6c6c6; }
.inrow { display: flex; align-items: center; gap: 17px; margin-bottom: 8px; }
.input { width: 160px; height: 34px; box-sizing: border-box; margin-left: -1px; padding-right: 3px; line-height: 32px; text-align: right; background: #403f40; border: 1px solid #686868; border-radius: 2px; color: #e8e8e8; }
.input.focus { background: #fff; border-color: #79a7d0; }
mark { background: #0a5cae; color: #fff; padding: 1px 0; }
.dbuttons { display: flex; justify-content: flex-end; gap: 16px; margin-top: 26px; }
.btn { width: 119px; height: 42px; background: transparent; border: 1px solid #d0d0d0; border-radius: 21px; color: #e6e6e6; font: 17.5px "Noto Sans", sans-serif; }
.btn.primary { width: 120px; border: 3px solid #f2f2f2; }
.cursor { position: absolute; left: 265px; top: 416px; }
</style>
